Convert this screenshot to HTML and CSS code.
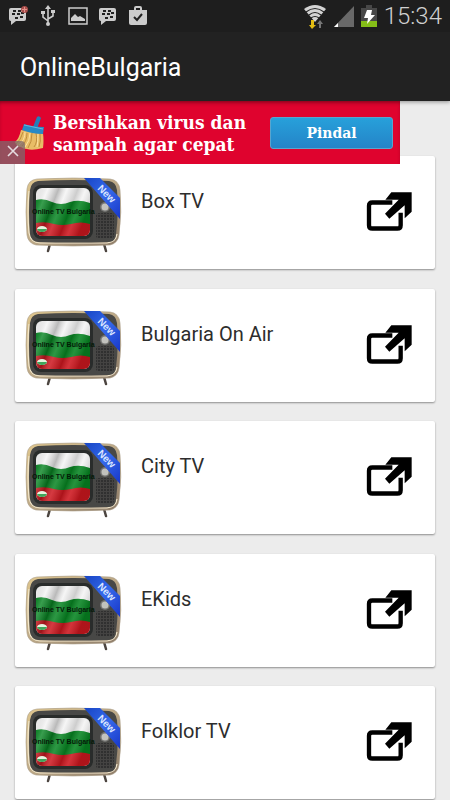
FILE: index.html
```html
<!DOCTYPE html>
<html lang="id">
<head>
<meta charset="utf-8">
<meta name="viewport" content="width=device-width, initial-scale=1">
<title>OnlineBulgaria</title>
<link rel="stylesheet" href="styles.css">
</head>
<body>
<svg class="defs" aria-hidden="true">
  <defs>
    <linearGradient id="case" x1="0" x2="1" y1="0" y2="1"><stop offset="0" stop-color="#e0c78e"/><stop offset=".5" stop-color="#bda987"/><stop offset="1" stop-color="#8a7967"/></linearGradient>
    <linearGradient id="cloth" x1="0" x2="1" y1="0" y2=".35"><stop offset="0" stop-color="#000" stop-opacity=".02"/><stop offset=".2" stop-color="#fff" stop-opacity=".2"/><stop offset=".38" stop-color="#000" stop-opacity=".24"/><stop offset=".52" stop-color="#fff" stop-opacity=".15"/><stop offset=".7" stop-color="#000" stop-opacity=".16"/><stop offset=".83" stop-color="#fff" stop-opacity=".12"/><stop offset="1" stop-color="#000" stop-opacity=".15"/></linearGradient>
    <linearGradient id="ribbon" x1="0" x2="1" y1="0" y2="1"><stop offset="0" stop-color="#1745c4"/><stop offset=".5" stop-color="#3568ea"/><stop offset="1" stop-color="#1736c8"/></linearGradient>
    <pattern id="grille" width="3" height="3" patternUnits="userSpaceOnUse"><rect width="3" height="3" fill="#444342"/><rect width="2" height="2" fill="#303030"/></pattern>
    <clipPath id="screen"><rect x="13" y="12" width="54" height="48" rx="6"/></clipPath>
    <symbol id="tv" viewBox="0 0 100 78">
      <path d="M27 68 25 75M81 68l2 7" stroke="#4c4540" stroke-width="2.5" stroke-linecap="round"/>
      <path d="M14 3Q50 1 87 3 96 4 97 14 99 36 96 59 95 67 87 69 50 71 13 69 5 67 4 59 2 36 4 13 5 4 14 3Z" fill="url(#case)" stroke="#a79a85" stroke-width=".6"/>
      <path d="M6 15Q4 36 6 57 8 67 17 67h67q9-1 10-9" fill="none" stroke="#f3e8cd" stroke-width="1.2"/>
      <path d="M15 5Q50 3 86 5 93 6 94 14 96 36 93 58 93 65 86 66 50 67 15 66 8 65 7 58 5 36 7 14 8 6 15 5Z" fill="#484846"/>
      <rect x="10" y="9" width="60" height="54" rx="8" fill="#292c2b"/>
      <g clip-path="url(#screen)">
        <path d="M13 12h54v48H13z" fill="#f4f4f4"/>
        <path d="M13 24q8-2 16 2 9 4 18 0 9-3 20 1v22H13z" fill="#078522"/>
        <path d="M13 47q9-2 18 1 8 2 17 0 10-3 19 0v13H13z" fill="#cd171f"/>
        <path d="M13 12h54v48H13z" fill="url(#cloth)"/>
        <ellipse cx="19" cy="53" rx="5" ry="3" fill="#e7f2df"/><path d="M14 53h10q-1 3-5 3-4 0-5-3" fill="#40a55b"/>
      </g>
      <rect x="73" y="37" width="18" height="25" rx="2" fill="url(#grille)"/>
      <circle cx="82" cy="31" r="5" fill="#737371"/><circle cx="82" cy="31" r="3.5" fill="#c2c2bd"/>
      <text x="9" y="38" class="tv-name">Online TV Bulgaria</text>
      <path d="M61 2h16l20 20v21z" fill="url(#ribbon)"/>
      <text x="0" y="0" class="tv-new" transform="translate(74 13) rotate(45)">New</text>
    </symbol>
    <symbol id="open" viewBox="0 0 150 125">
      <path d="M82 37H22q-10 0-10 10v58q0 10 10 10h75q10 0 10-10V68" fill="none" stroke="#000" stroke-width="13"/>
      <path d="M60 71 101 29H61L79 6h61v59L119 84V45L73 86z"/>
    </symbol>
    <symbol id="chat" viewBox="0 0 20 20">
      <path d="M3 2h13q2 0 2 2v9q0 2-2 2H8l-5 4v-4q-2 0-2-2V4q0-2 2-2z" fill="#ccc"/>
      <path d="M5 5h3M10 5h3M4 8h3M9 8h3M13 7h3M7 12h3M12 11h3" stroke="#222" stroke-width="1.8"/>
    </symbol>
  </defs>
</svg>

<header class="top">
  <div class="status">
    <div class="status-left">
      <svg width="20" height="20"><use href="#chat"/><circle cx="16.500" cy="3.500" r="3.500" fill="#a94f4c"/><path d="M14 3.500h5M16.500 1v5" stroke="#e4908a"/></svg>
      <svg width="20" height="22" viewBox="0 0 20 22" fill="none" stroke="#ccc" stroke-width="1.6"><path d="M10 3v16M10 16 5 12V8M10 14l5-3V7"/><path d="m10 0 3 4H7zM3 6h4v3H3zM13 5h4v3h-4z" fill="#ccc" stroke="none"/><circle cx="10" cy="19" r="2" fill="#ccc" stroke="none"/></svg>
      <svg width="20" height="20" viewBox="0 0 20 20"><path d="M1 2h18v16H1z" fill="none" stroke="#ccc" stroke-width="1.5"/><path d="M3 15v-3l4-4 3 3 2-1 5 3v2z" fill="#ccc"/></svg>
      <svg width="20" height="20"><use href="#chat"/></svg>
      <svg width="20" height="20" viewBox="0 0 20 20"><path d="M7 5V2q0-1 1-1h4q1 0 1 1v3" fill="none" stroke="#ccc" stroke-width="2"/><path d="M1 4h18v13q0 2-2 2H3q-2 0-2-2z" fill="#ccc"/><path d="m6 11 3 3 5-6" fill="none" stroke="#222" stroke-width="2"/></svg>
    </div>
    <div class="status-right">
      <svg width="24" height="25" viewBox="0 0 24 25"><path d="M12 18 1 5Q12-3 23 5z" fill="#d4d4d4"/><path d="M3 8q9-7 18 0M6 11q6-5 12 0M8 14q4-3 8 0" fill="none" stroke="#222" stroke-width="1.2"/><path d="M8 16h3v5h2l-4 4-3-4h2z" fill="#e3bd13"/><path d="m17 16-3 4h2v4h2v-4h2z" fill="#777"/></svg>
      <svg width="20" height="21" viewBox="0 0 20 21"><path d="M20 0v21H0z" fill="#696969"/><path d="M4 17v4H0z" fill="#fff"/></svg>
      <svg width="16" height="22" viewBox="0 0 16 22"><path d="M5 0h6v3h5v19H0V3h5z" fill="#484848"/><path d="M0 16h16v6H0z" fill="#85be18"/><path d="M6 5h5l-1 5h4l-8 9 1-6H3z" fill="#fff"/></svg>
      <time class="clock">15:34</time>
    </div>
  </div>
  <h1 class="title">OnlineBulgaria</h1>
  <aside class="ad">
    <svg class="broom" viewBox="0 0 30 35" aria-hidden="true">
      <path d="m18 12 4-10q2-2 4 1l-4 11z" fill="#247eb9"/>
      <path d="M6 15Q4 24 0 27q2 5 6 5 2 2 6 2 5 2 16-1 1-7 0-15z" fill="#e8bd66"/>
      <path d="M8 17Q6 25 1 29M12 18q0 8-5 13M17 18q0 9-4 15M21 18q2 9-2 14M25 18q1 9-1 14" fill="none" stroke="#c08d3d"/>
      <path d="M10 17q0 8-6 13M15 18q0 8-5 14M23 19q0 8-1 13" fill="none" stroke="#ffe3a1"/>
      <path d="M9 9q9 3 20 3l-1 7Q17 19 7 15z" fill="#2789c5"/><path d="m9 10 19 4" stroke="#66b6db"/>
    </svg>
    <p class="ad-text">Bersihkan virus dan<br>sampah agar cepat</p>
    <button class="ad-action" type="button">Pindal</button>
    <button class="ad-close" type="button" aria-label="Tutup"><svg width="12" height="12" viewBox="0 0 12 12"><path d="m1 1 10 10M11 1 1 11" stroke="#e6dce0" stroke-width="1.6"/></svg></button>
  </aside>
</header>

<main class="channels">
  <a class="card" href="#box"><svg class="tv"><use href="#tv"/></svg><span class="name">Box TV</span><svg class="open"><use href="#open"/></svg></a>
  <a class="card" href="#air"><svg class="tv"><use href="#tv"/></svg><span class="name">Bulgaria On Air</span><svg class="open"><use href="#open"/></svg></a>
  <a class="card" href="#city"><svg class="tv"><use href="#tv"/></svg><span class="name">City TV</span><svg class="open"><use href="#open"/></svg></a>
  <a class="card" href="#ekids"><svg class="tv"><use href="#tv"/></svg><span class="name">EKids</span><svg class="open"><use href="#open"/></svg></a>
  <a class="card" href="#folklor"><svg class="tv"><use href="#tv"/></svg><span class="name">Folklor TV</span><svg class="open"><use href="#open"/></svg></a>
</main>
</body>
</html>
```
FILE: styles.css
```css
* { box-sizing: border-box; }

body {
  margin: 0;
  min-height: 100vh;
  display: flex;
  flex-direction: column;
  background: #ececec;
  font-family: Roboto, sans-serif;
}

.defs { position: absolute; width: 0; height: 0; }

.top {
  position: relative;
  background: #222;
  box-shadow: 0 1px 4px rgba(0, 0, 0, .4);
}

.status {
  display: flex;
  justify-content: space-between;
  height: 32px;
  padding: 0 8px;
  background: #1e1e1e;
}

.status-left, .status-right { display: flex; align-items: center; }
.status-left { gap: 10px; }
.status-right { gap: 7px; }

.clock {
  color: #d0d0d0;
  font-size: 24px;
  line-height: 32px;
  font-weight: 300;
}

.title {
  margin: 0;
  padding: 20px 20px 17px;
  color: #fff;
  font-size: 25px;
  line-height: 32px;
  font-weight: 400;
}

.ad {
  position: absolute;
  z-index: 1;
  top: 100%;
  left: 0;
  width: 400px;
  max-width: 100%;
  height: 63px;
  padding: 0 7px 0 15px;
  display: flex;
  align-items: center;
  background: #df032e;
  box-shadow: inset 0 3px 4px -2px rgba(0, 0, 0, .5);
}

.broom { width: 30px; height: 35px; margin-right: 8px; }

.ad-text {
  flex: 1;
  margin: 0;
  color: #fff;
  font: bold 19px/22px "DejaVu Serif Condensed", "DejaVu Serif", serif;
  white-space: nowrap;
}

.ad-action {
  width: 123px;
  height: 32px;
  padding: 0;
  border: 1px solid #58a5cf;
  border-radius: 3px;
  background: linear-gradient(#27a0da, #2484c8);
  color: #fff;
  font: bold 14px/20px "DejaVu Serif", serif;
}

.ad-close {
  position: absolute;
  left: 0;
  bottom: 0;
  width: 25px;
  height: 23px;
  padding: 0;
  border: 0;
  border-radius: 0 4px 0 0;
  background: rgba(125, 105, 110, .75);
}

.channels {
  flex: 1;
  display: flex;
  flex-direction: column;
  justify-content: space-between;
  padding: 55px 15px 1px;
}

.card {
  display: flex;
  align-items: flex-start;
  min-height: 113px;
  padding: 20px 20px 15px 8px;
  background: #fff;
  border-radius: 2px;
  box-shadow: 0 1px 2px rgba(0, 0, 0, .4);
  color: #2d2d2d;
  text-decoration: none;
}

.tv { width: 100px; height: 78px; }

.name {
  flex: 1;
  margin: 11px 0 0 18px;
  font-size: 20px;
  line-height: 28px;
}

.open { width: 50px; height: 42px; margin-top: 14px; }

.tv-name { font: bold 7px "Liberation Sans", sans-serif; fill: #041a08; }
.tv-new { font: bold 10px "Liberation Sans", sans-serif; fill: #dce6ff; }
```
